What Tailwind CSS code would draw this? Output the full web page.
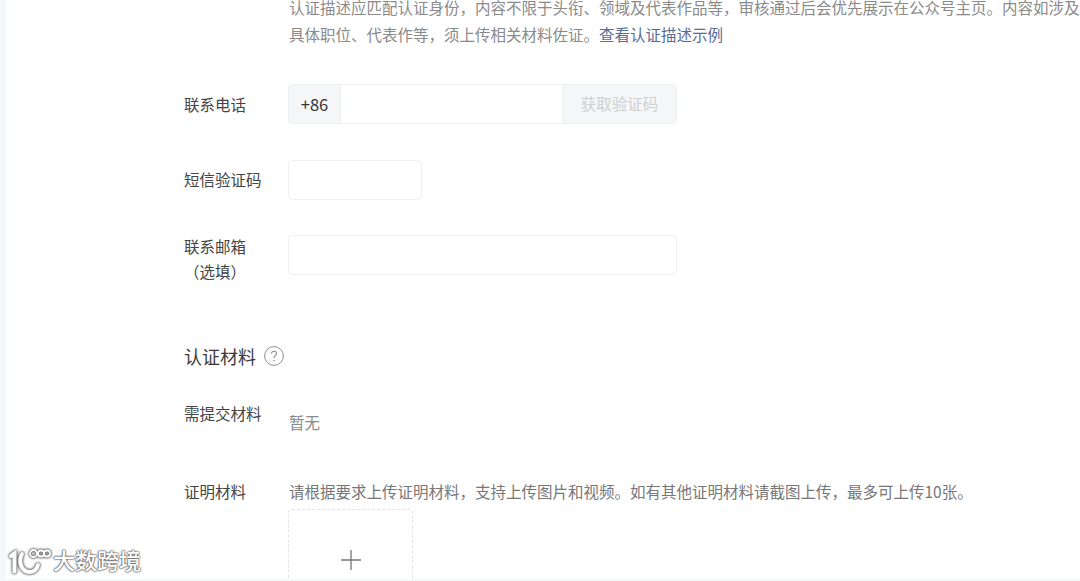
<!DOCTYPE html>
<html lang="zh-CN">
<head>
    <meta charset="UTF-8">
    <meta name="viewport" content="width=device-width, initial-scale=1.0">
    <title>认证材料</title>
    <script src="https://cdn.jsdelivr.net/npm/@tailwindcss/browser@4"></script>
</head>
<body class="h-[581px] overflow-hidden bg-[#f5f7f9] font-['Noto_Sans_CJK_SC',sans-serif] text-[15.5px] text-[#444]">
    <div class="relative ml-[6px] h-[579px] overflow-hidden bg-white pl-[178px]">

        <!-- DESCRIPTION -->
        <div class="ml-[105px] -mt-[4px] w-[791px] whitespace-nowrap font-['Liberation_Sans','Noto_Sans_CJK_SC',sans-serif] leading-[26.5px] text-[#8a8a8a]">
            认证描述应匹配认证身份，内容不限于头衔、领域及代表作品等，审核通过后会优先展示在公众号主页。内容如涉及<br>
            具体职位、代表作等，须上传相关材料佐证。<span class="text-[#576b95]">查看认证描述示例</span>
        </div>

        <!-- PHONE -->
        <div class="mt-[35px] flex">
            <div class="w-[105px] pt-[8px] leading-[24px]">联系电话</div>
            <div class="-ml-[1px] flex h-[40px] w-[389px] overflow-hidden rounded-[4px] border border-[#f0f1f3]">
                <div class="flex w-[51px] items-center justify-center bg-[#f5f6f8] text-[16.5px] text-[#333]">+86</div>
                <div class="flex-1 border-x border-[#eeeff1] bg-white"></div>
                <div class="flex w-[113px] items-center justify-center bg-[#f5f6f8] text-[#cfcfcf]">获取验证码</div>
            </div>
        </div>

        <!-- SMS CODE -->
        <div class="mt-[36px] flex">
            <div class="w-[105px] pt-[7px] leading-[24px]">短信验证码</div>
            <div class="-ml-[1px] h-[40px] w-[134px] rounded-[5px] border border-[#eeeff1]"></div>
        </div>

        <!-- EMAIL -->
        <div class="mt-[35px] flex">
            <div class="-mt-[1px] w-[105px] leading-[25px]">联系邮箱<br>（选填）</div>
            <div class="-ml-[1px] h-[40px] w-[389px] rounded-[4px] border border-[#eeeff1]"></div>
        </div>

        <!-- MATERIALS -->
        <div class="mt-[60px] flex items-center gap-[8px] text-[18px] leading-[24px] text-[#3a3a3a]">
            <span>认证材料</span>
            <svg class="h-[20px] w-[20px]" viewBox="0 0 20 20" fill="none" stroke="#8f8f8f">
                <circle cx="10" cy="10" r="9.4" stroke-width="1"/>
                <path d="M7.4 7.8c0-1.6 1.2-2.6 2.6-2.6s2.6 1 2.6 2.4c0 1.2-.8 1.7-1.5 2.2-.7.4-1.1.9-1.1 1.7v.7" stroke-width="1.1"/>
                <circle cx="10" cy="14.6" r=".8" fill="#8f8f8f" stroke="none"/>
            </svg>
        </div>

        <div class="mt-[33px] flex">
            <div class="w-[105px] leading-[24px]">需提交材料</div>
            <div class="pt-[9px] leading-[24px] text-[#8a8a8a]">暂无</div>
        </div>

        <div class="mt-[45px] flex">
            <div class="w-[105px] leading-[24px]">证明材料</div>
            <div>
                <div class="leading-[24px] text-[#777]">请根据要求上传证明材料，支持上传图片和视频。如有其他证明材料请截图上传，最多可上传10张。</div>
                <div class="-ml-[1px] mt-[6px] flex h-[102px] w-[125px] items-center justify-center rounded-[4px] border border-dashed border-[#e2e2e2]">
                    <svg class="h-[20px] w-[20px]" viewBox="0 0 20 20" stroke="#777" stroke-width="1.3">
                        <path d="M0 10h20M10 0v20"/>
                    </svg>
                </div>
            </div>
        </div>

        <!-- WATERMARK -->
        <div class="absolute left-[2px] top-[543px] flex items-center gap-[2px] text-[22px] font-medium leading-[26px] text-white [text-shadow:0_0_2px_#555,0_0_2px_#555,0_0_1px_#555]">
            <svg class="h-[32px] w-[43px]" viewBox="0 0 43 32" fill="none" stroke="#fff" stroke-linecap="round" style="filter: drop-shadow(0 0 1px #555) drop-shadow(0 0 1px #777)">
                <path d="M3 13l3.5-2.500v18" stroke-width="4"/>
                <path d="M14 11c-4 7-1 17 7 18 4 .4 8-2.500 9-7" stroke-width="4"/>
                <circle cx="25.500" cy="10.500" r="3.500" stroke-width="1.800"/>
                <circle cx="33" cy="10.500" r="3" stroke-width="1.800"/>
                <circle cx="39" cy="10.500" r="3" stroke-width="1.800"/>
            </svg>
            <span>大数跨境</span>
        </div>
    </div>
</body>
</html>
